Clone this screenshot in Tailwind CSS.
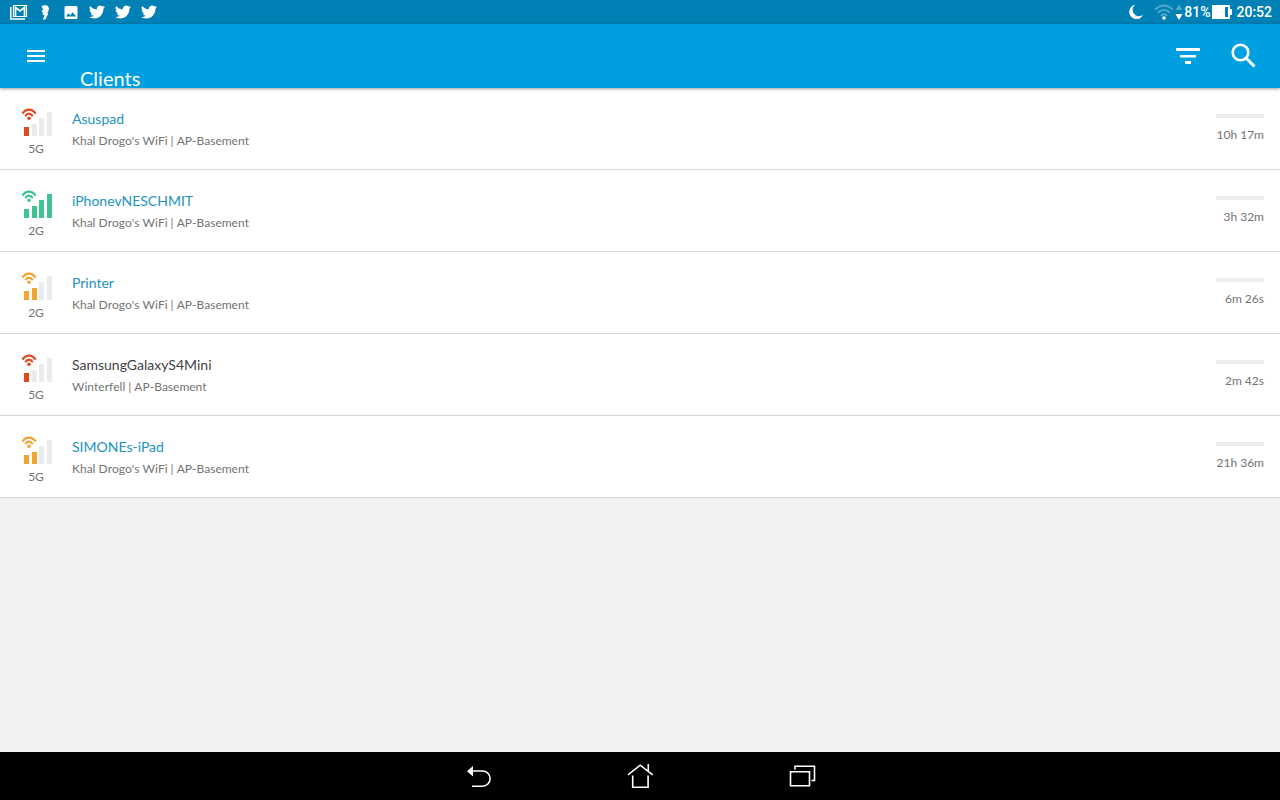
<!DOCTYPE html>
<html lang="en">
<head>
<meta charset="utf-8">
<meta name="viewport" content="width=device-width, initial-scale=1">
<title>Clients</title>
<script src="https://cdn.jsdelivr.net/npm/@tailwindcss/browser@4"></script>
</head>
<body class="flex min-h-screen flex-col bg-[#f1f1f1] font-['Lato','Liberation_Sans',sans-serif]">
<svg class="hidden" aria-hidden="true">
  <symbol id="bird" viewBox="0 0 24 24"><path d="M23.95 4.57a10 10 0 0 1-2.82.77 4.96 4.96 0 0 0 2.16-2.72c-.95.55-2 .95-3.13 1.18a4.92 4.92 0 0 0-8.38 4.48C7.69 8.1 4.07 6.13 1.64 3.16a4.92 4.92 0 0 0 1.52 6.57 4.9 4.9 0 0 1-2.23-.61v.06c0 2.38 1.7 4.37 3.95 4.82a5 5 0 0 1-2.21.09 4.94 4.94 0 0 0 4.6 3.42A9.87 9.87 0 0 1 0 19.54a14 14 0 0 0 7.55 2.21c9.05 0 14-7.5 14-13.98 0-.21 0-.42-.02-.63a9.94 9.94 0 0 0 2.42-2.57z"/></symbol>
  <symbol id="waves" viewBox="0 0 32 28"><g fill="none" stroke="currentColor" stroke-width="2.1"><path d="M2.3 5.6Q5.2 1.6 9 1.6T15.700 5.600"/><path d="M5.300 8.300Q6.900 5.600 9 5.600T12.700 8.300"/></g><circle cx="9" cy="10.200" r="1.800" fill="currentColor"/></symbol>
</svg>

<div class="flex h-6 items-center justify-between bg-[#0080b4] px-2 text-white">
  <div class="flex items-center gap-2">
    <svg class="size-5" viewBox="0 0 20 20" fill="none" stroke="currentColor"><path d="M2.800 5v12H17" stroke-width="1.500"/><path d="M5.500 3.500h13v11h-13z" stroke-width="1.200"/><path d="M7.500 14V5.500L12 9l4.500-3.500V14" stroke-width="1.700"/></svg>
    <svg class="h-5 w-[18px]" viewBox="0 0 18 20" fill="currentColor"><path d="M5.500 4 9 3l3 1 1 2.500-.5 2.500-1 1 .5 2.500-1.500 2-.5 2.500L7 18l1.300-5-1.800-.5.500-2-1.500-1L7 7.500z"/></svg>
    <svg class="h-5 w-[18px]" viewBox="0 0 18 20" fill="currentColor"><path fill-rule="evenodd" d="M4 4h10q1.500 0 1.500 1.500v10q0 1.500-1.500 1.500H4Q2.500 17 2.500 15.500v-10Q2.500 4 4 4zM4 14.500h10l-3.300-4.300-2.500 3-1.700-2z"/></svg>
    <svg class="size-[18px]" fill="currentColor"><use href="#bird" x="1" y="1" width="16" height="16"/></svg>
    <svg class="size-[18px]" fill="currentColor"><use href="#bird" x="1" y="1" width="16" height="16"/></svg>
    <svg class="size-[18px]" fill="currentColor"><use href="#bird" x="1" y="1" width="16" height="16"/></svg>
  </div>
  <div class="flex items-center font-['Roboto',sans-serif] text-sm font-medium">
    <svg class="mr-2.5 h-4 w-4" viewBox="0 0 16 16" fill="currentColor"><path d="M7 .8A7.200 7.200 0 1 0 15 10.800 6.200 6.200 0 0 1 7 .8z"/></svg>
    <svg class="h-4 w-5" viewBox="0 0 20 16" fill="none" stroke="#50a8cc" stroke-width="1.800"><path d="M1 5.500Q10-2.500 19 5.500M3.800 8.700Q10 3 16.200 8.700M6.700 11.700Q10 8.700 13.300 11.700"/><circle cx="10" cy="14" r="1.800" fill="#fff" stroke="none"/></svg>
    <svg class="mx-px h-4 w-2" viewBox="0 0 8 16"><path fill="#50a8cc" d="M.5 6 4 .5 7.500 6z"/><path fill="#fff" d="M.5 10h7L4 16z"/></svg>
    <span>81%</span>
    <svg class="ml-0.5 mr-1 h-4 w-5" viewBox="0 0 20 16"><path fill="#fff" fill-rule="evenodd" d="M0 1h18v4h2v6h-2v4H0zM13 3v10h3V3z"/></svg>
    <span>20:52</span>
  </div>
</div>

<header class="relative flex h-16 items-center bg-[#009fe0] px-4 text-white shadow-[0_1px_3px_rgba(0,0,0,0.4)]">
  <button type="button" aria-label="Open menu" class="flex size-10 items-center justify-center"><svg class="h-6 w-6" viewBox="0 0 24 24" fill="currentColor"><path d="M3 18h18v-2H3zM3 13h18v-2H3zM3 6v2h18V6z"/></svg></button>
  <h1 class="ml-6 flex-1 self-end text-xl leading-5">Clients</h1>
  <button type="button" aria-label="Filter clients" class="mr-4 flex size-10 items-center justify-center"><svg class="h-8 w-8" viewBox="0 0 32 32" fill="currentColor"><path d="M4 8h24v3H4zM8 15h16v2.500H8zM13 21h6v3h-6z"/></svg></button>
  <button type="button" aria-label="Search clients" class="flex size-10 items-center justify-center"><svg class="h-8 w-8" viewBox="0 0 32 32" fill="none" stroke="currentColor"><circle cx="12.500" cy="12.500" r="7.800" stroke-width="2.600"/><path d="m18 18 8.500 8.500" stroke-width="3"/></svg></button>
</header>

<main class="flex-1">
  <ul class="text-xs leading-4 text-[#737373] [font-kerning:none]">
    <li class="border-b border-[#d6d6d6] bg-white"><a href="#asuspad" class="flex px-4 pt-5 pb-3">
      <div class="flex w-10 flex-col items-center gap-[5px]"><svg class="h-7 w-8 text-[#e04a20]" viewBox="0 0 32 28"><use href="#waves"/><path fill="#ebebeb" d="M12 16h5v12h-5zM19 10h5v18h-5zM27 4h5v24h-5z"/><path fill="currentColor" d="M4 19h5v9H4z"/></svg><span>5G</span></div>
      <div class="ml-4 flex-1 pt-px"><h2 class="mb-1 text-sm leading-5 text-[#1c93c0] [font-kerning:auto]">Asuspad</h2><p>Khal Drogo's WiFi | AP-Basement</p></div>
      <div class="flex flex-col items-end gap-[9px] pt-1.5"><div class="h-1 w-12 bg-[#ededed]"></div><span>10h 17m</span></div>
    </a></li>
    <li class="border-b border-[#d6d6d6] bg-white"><a href="#iphone" class="flex px-4 pt-5 pb-3">
      <div class="flex w-10 flex-col items-center gap-[5px]"><svg class="h-7 w-8 text-[#3dc490]" viewBox="0 0 32 28"><use href="#waves"/><path fill="currentColor" d="M4 19h5v9H4zM12 16h5v12h-5zM19 10h5v18h-5zM27 4h5v24h-5z"/></svg><span>2G</span></div>
      <div class="ml-4 flex-1 pt-px"><h2 class="mb-1 text-sm leading-5 text-[#1c93c0] [font-kerning:auto]">iPhonevNESCHMIT</h2><p>Khal Drogo's WiFi | AP-Basement</p></div>
      <div class="flex flex-col items-end gap-[9px] pt-1.5"><div class="h-1 w-12 bg-[#ededed]"></div><span>3h 32m</span></div>
    </a></li>
    <li class="border-b border-[#d6d6d6] bg-white"><a href="#printer" class="flex px-4 pt-5 pb-3">
      <div class="flex w-10 flex-col items-center gap-[5px]"><svg class="h-7 w-8 text-[#f0a530]" viewBox="0 0 32 28"><use href="#waves"/><path fill="#ebebeb" d="M19 10h5v18h-5zM27 4h5v24h-5z"/><path fill="currentColor" d="M4 19h5v9H4zM12 16h5v12h-5z"/></svg><span>2G</span></div>
      <div class="ml-4 flex-1 pt-px"><h2 class="mb-1 text-sm leading-5 text-[#1c93c0] [font-kerning:auto]">Printer</h2><p>Khal Drogo's WiFi | AP-Basement</p></div>
      <div class="flex flex-col items-end gap-[9px] pt-1.5"><div class="h-1 w-12 bg-[#ededed]"></div><span>6m 26s</span></div>
    </a></li>
    <li class="border-b border-[#d6d6d6] bg-white"><a href="#galaxy" class="flex px-4 pt-5 pb-3">
      <div class="flex w-10 flex-col items-center gap-[5px]"><svg class="h-7 w-8 text-[#e04a20]" viewBox="0 0 32 28"><use href="#waves"/><path fill="#ebebeb" d="M12 16h5v12h-5zM19 10h5v18h-5zM27 4h5v24h-5z"/><path fill="currentColor" d="M4 19h5v9H4z"/></svg><span>5G</span></div>
      <div class="ml-4 flex-1 pt-px"><h2 class="mb-1 text-sm leading-5 text-[#424242] [font-kerning:auto]">SamsungGalaxyS4Mini</h2><p>Winterfell | AP-Basement</p></div>
      <div class="flex flex-col items-end gap-[9px] pt-1.5"><div class="h-1 w-12 bg-[#ededed]"></div><span>2m 42s</span></div>
    </a></li>
    <li class="border-b border-[#d6d6d6] bg-white"><a href="#ipad" class="flex px-4 pt-5 pb-3">
      <div class="flex w-10 flex-col items-center gap-[5px]"><svg class="h-7 w-8 text-[#f0a530]" viewBox="0 0 32 28"><use href="#waves"/><path fill="#ebebeb" d="M19 10h5v18h-5zM27 4h5v24h-5z"/><path fill="currentColor" d="M4 19h5v9H4zM12 16h5v12h-5z"/></svg><span>5G</span></div>
      <div class="ml-4 flex-1 pt-px"><h2 class="mb-1 text-sm leading-5 text-[#1c93c0] [font-kerning:auto]">SIMONEs-iPad</h2><p>Khal Drogo's WiFi | AP-Basement</p></div>
      <div class="flex flex-col items-end gap-[9px] pt-1.5"><div class="h-1 w-12 bg-[#ededed]"></div><span>21h 36m</span></div>
    </a></li>
  </ul>
</main>

<nav aria-label="System" class="flex h-12 items-center justify-center gap-[130px] bg-black text-white">
  <button type="button" aria-label="Back"><svg class="size-8" viewBox="0 0 32 32" fill="none" stroke="currentColor" stroke-width="1.600"><path d="M9 11h11.500a7.600 7.600 0 0 1 0 15.200H10"/><path fill="currentColor" stroke="none" d="M5 11.200 11 6v10.400z"/></svg></button>
  <button type="button" aria-label="Home"><svg class="size-8" viewBox="0 0 32 32" fill="none" stroke="currentColor" stroke-width="1.600"><path d="M4 14.800 16.200 5.200 28.700 14.800M24.300 4v7.500M8.700 15.500v11.700h15.400V15.500"/></svg></button>
  <button type="button" aria-label="Recent apps"><svg class="size-8" viewBox="0 0 32 32" fill="none" stroke="currentColor" stroke-width="1.600"><path d="M4.500 11.700h19v14h-19zM9 9.500V6.200h19.500v14.300h-3"/></svg></button>
</nav>
</body>
</html>
